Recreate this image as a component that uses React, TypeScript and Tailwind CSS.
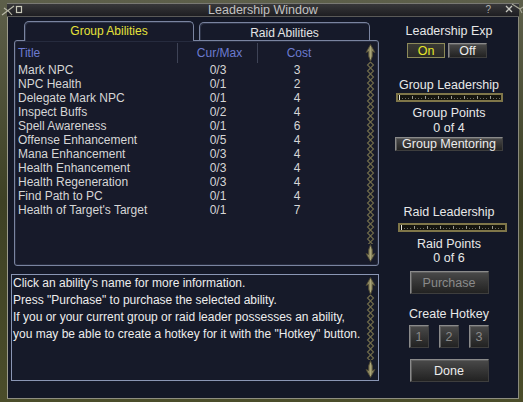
import React from "react";

const rows: [string, string, string][] = [
  ["Mark NPC", "0/3", "3"],
  ["NPC Health", "0/1", "2"],
  ["Delegate Mark NPC", "0/1", "4"],
  ["Inspect Buffs", "0/2", "4"],
  ["Spell Awareness", "0/1", "6"],
  ["Offense Enhancement", "0/5", "4"],
  ["Mana Enhancement", "0/3", "4"],
  ["Health Enhancement", "0/3", "4"],
  ["Health Regeneration", "0/3", "4"],
  ["Find Path to PC", "0/1", "4"],
  ["Health of Target's Target", "0/1", "7"],
];

function Arrow({ down }: { down?: boolean }) {
  return (
    <svg width="11" height="18" viewBox="0 0 11 18" className="flex-none" style={down ? { transform: "rotate(180deg)" } : undefined}>
      <polygon points="5.5,0.5 10,8.5 7.5,7.5 7.5,12 5.5,17.5 3.5,12 3.5,7.5 1,8.5" fill="#8f8a62" stroke="#4c4832" strokeWidth="0.8" />
      <line x1="5.5" y1="2" x2="5.5" y2="15" stroke="#b3ad80" strokeWidth="0.8" />
    </svg>
  );
}

function Chain({ id }: { id: string }) {
  return (
    <svg width="11" className="flex-1 min-h-0 w-[11px]">
      <defs>
        <pattern id={id} x="0" y="0" width="11" height="6" patternUnits="userSpaceOnUse">
          <path d="M5.5 0 L8.5 3 L5.5 6 L2.5 3 Z" fill="none" stroke="#706b4a" strokeWidth="1.1" />
        </pattern>
      </defs>
      <rect x="0" y="0" width="11" height="100%" fill={`url(#${id})`} />
    </svg>
  );
}

function Scroll({ id }: { id: string }) {
  return (
    <div className="flex flex-col items-center w-[11px]">
      <Arrow />
      <Chain id={id} />
      <Arrow down />
    </div>
  );
}

function Bar({ w, id }: { w: number; id: string }) {
  return (
    <div className="h-[9px] border-[2px] border-[#7f7649] bg-[#14140f] flex" style={{ width: w }}>
      <svg width="100%" height="5">
        <defs>
          <pattern id={id} x="1" y="0" width="13" height="5" patternUnits="userSpaceOnUse">
            <rect x="0" y="1" width="1" height="3" fill="#9a9a90" />
            <rect x="3" y="3" width="1" height="1" fill="#6e6e66" />
            <rect x="6" y="3" width="1" height="1" fill="#6e6e66" />
            <rect x="9" y="3" width="1" height="1" fill="#6e6e66" />
          </pattern>
        </defs>
        <rect x="0" y="0" width="100%" height="5" fill={`url(#${id})`} />
        <rect x="1" y="0" width="1" height="5" fill="#e8e8e0" />
      </svg>
    </div>
  );
}

function Btn({
  children,
  className = "",
  disabled,
}: {
  children: React.ReactNode;
  className?: string;
  disabled?: boolean;
}) {
  return (
    <div
      className={`flex items-center justify-center border border-t-[#8a8a8a] border-l-[#8a8a8a] border-r-[#3e3e3e] border-b-[#3e3e3e] bg-linear-to-b from-[#4a4a4a] to-[#222222] shadow-[inset_1px_1px_0_#5e5e5e] ${
        disabled ? "text-[#8a8a8a]" : "text-[#ececec]"
      } ${className}`}
    >
      {children}
    </div>
  );
}

export default function App() {
  return (
    <div
      className="w-[523px] h-[402px] overflow-hidden pl-[7px] pt-[3px] bg-linear-to-b from-[#5d5f4a] via-[#3e4124] to-[#4b4d2a] text-[12px] leading-[14px]"
      style={{ fontFamily: '"Liberation Sans", Arial, sans-serif' }}
    >
      <div className="relative w-[512px] h-[396px] flex flex-col bg-[#141827] border-l border-r border-b border-l-[#9a9a8c] border-r-[#8a8a7c] border-b-[#8e8e80]">
        {/* title bar */}
        <div className="relative h-[14px] flex-none -ml-px -mr-px border-t border-b border-t-[#7a7a74] border-b-[#5a5a58] bg-linear-to-b from-[#38383a] to-[#1e1e22] flex items-center justify-center">
          <span className="text-[12.5px] leading-[12px] text-[#c2c2c2]">Leadership Window</span>
          <span className="absolute right-[28px] top-[0px] text-[10px] leading-[12px] text-[#b0b0b0]">?</span>
          <svg className="absolute left-[-6px] top-[-2px]" width="24" height="16" viewBox="0 0 24 16">
            <path d="M1 13 L13 4 M3 6 Q8 9 11 13" stroke="#b8b8a8" strokeWidth="1.2" fill="none" />
            <rect x="15.5" y="4.5" width="5" height="6" fill="none" stroke="#c8c8b8" strokeWidth="1.2" />
          </svg>
          <svg className="absolute right-[-5px] top-[-3px]" width="24" height="18" viewBox="0 0 24 18">
            <path d="M6 5 L12 11 M12 5 L6 11" stroke="#c8c8c0" strokeWidth="1.3" />
            <path d="M12 3 L20 8 L23 6 M20 8 L22 12" stroke="#a8a898" strokeWidth="1.1" fill="none" />
          </svg>
        </div>

        {/* body */}
        <div className="flex flex-1 min-h-0">
          {/* left column */}
          <div className="w-[372px] flex flex-col">
            <div className="flex mt-[4px] h-[19px] ml-[16px] gap-[5px] items-end">
              <div className="relative z-10 w-[170px] h-[20px] -mb-px rounded-t-[5px] border-t border-l border-r border-[#7a84a0] bg-[#171a2a] shadow-[inset_1px_1px_0_#2e3448] flex items-center justify-center text-[#e6e23a] pb-[1px]">
                Group Abilities
              </div>
              <div className="w-[171px] h-[18px] rounded-t-[5px] border-t border-l border-r border-[#7a84a0] bg-[#161a2a] shadow-[inset_1px_1px_0_#2e3448] flex items-center justify-center text-[#e4e4e4] pt-[2px]">
                Raid Abilities
              </div>
            </div>
            <div className="ml-[6px] w-[365px] h-[226px] border border-[#7a84a0] rounded-[3px] bg-[#171a2a] shadow-[inset_0_0_0_1px_#262b3e] flex">
              <div className="flex-1 flex flex-col pt-[2px]">
                <div className="flex h-[20px] items-center">
                  <div className="w-[163px] pl-[3px] h-full flex items-center border-r border-[#3e4356] text-[#6c7bd0]">Title</div>
                  <div className="w-[80px] h-full flex items-center justify-center border-r border-[#3e4356] text-[#6c7bd0] pl-[4px]">Cur/Max</div>
                  <div className="w-[82px] h-full flex items-center justify-center text-[#6c7bd0]">Cost</div>
                </div>
                {rows.map(([t, c, cost]) => (
                  <div key={t} className="flex h-[14px] items-center text-[#d6d6d6]">
                    <div className="w-[163px] pl-[3px] whitespace-nowrap">{t}</div>
                    <div className="w-[80px] text-center">{c}</div>
                    <div className="w-[82px] text-center pr-[4px]">{cost}</div>
                  </div>
                ))}
              </div>
              <div className="flex py-[3px] mr-[2px]">
                <Scroll id="chainA" />
              </div>
            </div>
            <div className="mt-[8px] ml-[3px] w-[368px] h-[107px] border border-[#8a96b4] bg-[#161a29] flex">
              <div className="flex-1 pl-[1px] leading-[17px] text-[#ededed] whitespace-nowrap">
                <div>Click an ability's name for more information.</div>
                <div>Press "Purchase" to purchase the selected ability.</div>
                <div>If you or your current group or raid leader possesses an ability,</div>
                <div>you may be able to create a hotkey for it with the "Hotkey" button.</div>
              </div>
              <div className="flex py-[2px] mr-[2px]">
                <Scroll id="chainB" />
              </div>
            </div>
          </div>

          {/* right column */}
          <div className="w-[138px] flex flex-col items-center text-[12.5px] text-[#e8e8e8]">
            <div className="mt-[7px] h-[14px] leading-[14px]">Leadership Exp</div>
            <div className="mt-[5px] flex gap-[3px] -ml-[4px]">
              <div className="w-[38px] h-[15px] flex items-center justify-center border border-[#8c8a5a] bg-linear-to-b from-[#3a3a34] to-[#2a2a26] text-[#e6e628]">On</div>
              <Btn className="w-[39px] h-[15px]">Off</Btn>
            </div>
            <div className="mt-[20px] h-[14px]">Group Leadership</div>
            <div className="mt-[1px]">
              <Bar w={107} id="barA" />
            </div>
            <div className="mt-[4px] h-[15px] leading-[15px]">Group Points</div>
            <div className="h-[15px] leading-[15px]">0 of 4</div>
            <Btn className="mt-[1px] w-[108px] h-[14px] leading-[12px]">Group Mentoring</Btn>
            <div className="mt-[54px] h-[14px]">Raid Leadership</div>
            <div className="mt-[4px] ml-[6px]">
              <Bar w={109} id="barB" />
            </div>
            <div className="mt-[6px] h-[13px] leading-[13px]">Raid Points</div>
            <div className="h-[14px]">0 of 6</div>
            <Btn disabled className="mt-[6px] w-[79px] h-[23px]">Purchase</Btn>
            <div className="mt-[13px] h-[14px]">Create Hotkey</div>
            <div className="mt-[4px] flex gap-[10px]">
              <Btn disabled className="w-[20px] h-[23px]">1</Btn>
              <Btn disabled className="w-[20px] h-[23px]">2</Btn>
              <Btn disabled className="w-[20px] h-[23px]">3</Btn>
            </div>
            <Btn className="mt-[11px] w-[79px] h-[23px]">Done</Btn>
          </div>
        </div>
      </div>
    </div>
  );
}
